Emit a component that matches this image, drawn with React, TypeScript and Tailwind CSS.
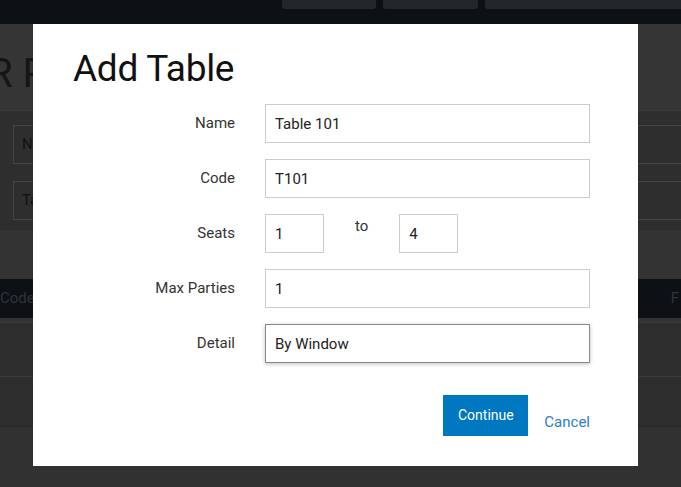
import React from "react";

const font = { fontFamily: "Roboto, 'Noto Sans', sans-serif" };

function Field({ label, children }: { label: string; children: React.ReactNode }) {
  return (
    <div className="flex items-start">
      <div className="w-[162px] h-[39px] flex items-center justify-end text-[15px] text-[#333]">{label}</div>
      <div className="ml-[30px]">{children}</div>
    </div>
  );
}

function TextBox({ value, width = "w-[325px]", focused = false }: { value: string; width?: string; focused?: boolean }) {
  return (
    <input
      readOnly
      value={value}
      className={`${width} h-[39px] px-[9px] text-[15px] text-[#222] bg-white outline-none ${
        focused ? "border border-[#888] shadow-[0_1px_4px_rgba(0,0,0,0.25)]" : "border border-[#ccc]"
      }`}
      style={font}
    />
  );
}

export default function App() {
  return (
    <div className="relative w-[681px] h-[487px] overflow-hidden bg-[#313131]" style={font}>
      {/* page behind the overlay */}
      <div className="h-[24px] bg-[#0d1014] flex justify-end gap-[7px] pl-[282px]">
        <div className="w-[94px] h-[9px] bg-[#23272a] rounded-b-[3px]" />
        <div className="w-[95px] h-[9px] bg-[#23272a] rounded-b-[3px]" />
        <div className="flex-1 h-[9px] bg-[#23272a] rounded-bl-[3px]" />
      </div>
      <div className="h-[86px] bg-[#353535] flex items-center">
        <span className="text-[40px] leading-[40px] text-[#151515] -ml-[12px] mt-[14px] whitespace-nowrap">R P</span>
      </div>
      <div className="h-[120px] bg-[#2e2e2e] border-t border-[#3a3a3a] flex flex-col gap-[17px] pt-[14px] pl-[13px]">
        <div className="w-[700px] h-[39px] border border-[#444] flex items-center pl-[8px] text-[15px] text-[#111]">N</div>
        <div className="w-[700px] h-[39px] border border-[#444] flex items-center pl-[8px] text-[15px] text-[#111]">Ta</div>
      </div>
      <div className="h-[49px] bg-[#333]" />
      <div className="h-[39px] bg-[#0d1014] flex items-center justify-between text-[15px] text-[#30343a] pr-[2px]">
        <span>Code</span>
        <span>F</span>
      </div>
      <div className="h-[4px] bg-[#333]" />
      <div className="h-[54px] bg-[#2d2d2d] border-t border-[#3a3a3a]" />
      <div className="h-[51px] bg-[#2d2d2d] border-t border-[#3a3a3a] border-b border-b-[#262626]" />

      {/* modal */}
      <div className="absolute left-[33px] top-[24px] w-[605px] h-[442px] bg-white pl-[40px]">
        <h1 className="mt-[26px] text-[37px] leading-[37px] text-[#111] tracking-[-0.3px]">Add Table</h1>
        <div className="mt-[17px] flex flex-col gap-[16px]">
          <Field label="Name">
            <TextBox value="Table 101" />
          </Field>
          <Field label="Code">
            <TextBox value="T101" />
          </Field>
          <Field label="Seats">
            <div className="flex items-start">
              <TextBox value="1" width="w-[59px]" />
              <span className="ml-[31px] mt-[1px] text-[15px] text-[#333]">to</span>
              <div className="ml-[31px]">
                <TextBox value="4" width="w-[59px]" />
              </div>
            </div>
          </Field>
          <Field label="Max Parties">
            <TextBox value="1" />
          </Field>
          <Field label="Detail">
            <TextBox value="By Window" focused />
          </Field>
        </div>
        <div className="mt-[32px] w-[517px] flex justify-end items-end gap-[16px]">
          <button className="w-[85px] h-[41px] bg-[#0077c1] text-white text-[14px]">Continue</button>
          <button className="text-[15px] text-[#2a80c2] leading-[20px] mb-[4px]">Cancel</button>
        </div>
      </div>
    </div>
  );
}
